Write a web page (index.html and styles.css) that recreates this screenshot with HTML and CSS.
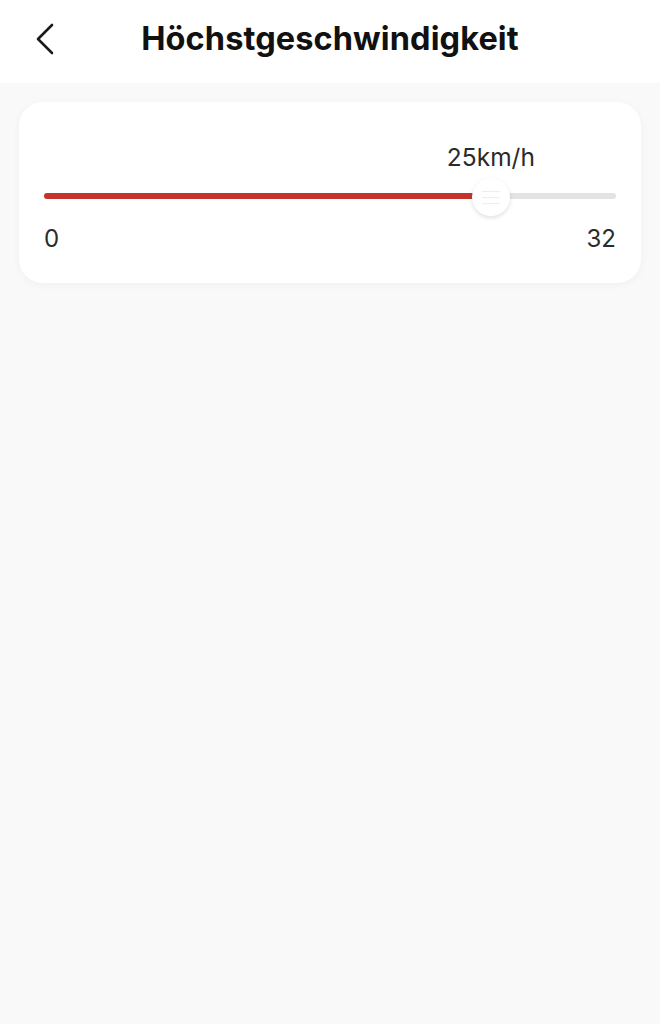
FILE: index.html
```html
<!DOCTYPE html>
<html lang="de">
<head>
    <meta charset="UTF-8">
    <meta name="viewport" content="width=device-width, initial-scale=1.0">
    <title>Höchstgeschwindigkeit</title>
    <link rel="stylesheet" href="styles.css">
</head>
<body>
    <header class="nav-bar">
        <div class="nav-back">
            <svg width="22" height="34" viewBox="0 0 22 34">
                <path d="M18 3 L4 17 L18 31" fill="none" stroke="#1a1a1a" stroke-width="2.6" stroke-linecap="round" stroke-linejoin="round"/>
            </svg>
        </div>
        <h1 class="nav-title">Höchstgeschwindigkeit</h1>
        <div class="nav-spacer"></div>
    </header>

    <main class="content">
        <section class="speed-card">
            <div class="slider">
                <div class="slider-value" style="left: 78.125%">25km/h</div>
                <div class="slider-track">
                    <div class="slider-fill" style="width: 78.125%"></div>
                    <div class="slider-thumb" style="left: 78.125%">
                        <span></span><span></span><span></span>
                    </div>
                </div>
            </div>
            <div class="slider-range">
                <span>0</span>
                <span>32</span>
            </div>
        </section>
    </main>
</body>
</html>
```

FILE: styles.css
```css
* {
    margin: 0;
    padding: 0;
    box-sizing: border-box;
}

body {
    height: 100vh;
    background: #f9f9f9;
    font-family: Inter, 'Noto Sans', sans-serif;
    color: #1a1a1a;
    overflow: hidden;
}

.nav-bar {
    height: 83px;
    background: #fff;
    display: flex;
    align-items: center;
    padding: 0 24px 6px 34px;
}

.nav-back {
    width: 36px;
    display: flex;
    align-items: center;
}

.nav-title {
    flex: 1;
    text-align: center;
    font-size: 32.5px;
    font-weight: 700;
    letter-spacing: 0.1px;
    color: #111;
    margin-right: 10px;
}

.nav-spacer {
    width: 36px;
}

.content {
    padding: 19px 19px 0;
}

.speed-card {
    background: #fff;
    border-radius: 24px;
    padding: 40px 25px 28px;
    box-shadow: 0 2px 8px rgba(0,0,0,0.04);
}

.slider {
    position: relative;
    padding-top: 38px;
}

.slider-value {
    position: absolute;
    top: 0;
    transform: translateX(-50%);
    font-size: 24.5px;
    color: #2b2b2b;
    white-space: nowrap;
}

.slider-track {
    position: relative;
    height: 6px;
    border-radius: 3px;
    background: #e3e3e3;
    margin-top: 13px;
}

.slider-fill {
    height: 100%;
    border-radius: 3px;
    background: #c4342c;
}

.slider-thumb {
    position: absolute;
    top: 50%;
    width: 38px;
    height: 38px;
    border-radius: 50%;
    background: #fff;
    transform: translate(-50%, -47%);
    box-shadow: 0 2px 4px rgba(0,0,0,0.12);
    display: flex;
    flex-direction: column;
    align-items: center;
    justify-content: center;
    gap: 5px;
}

.slider-thumb span {
    width: 18px;
    height: 1px;
    background: #ececec;
}

.slider-range {
    display: flex;
    justify-content: space-between;
    margin-top: 24px;
    font-size: 24px;
    color: #2b2b2b;
    line-height: 32px;
}
```
